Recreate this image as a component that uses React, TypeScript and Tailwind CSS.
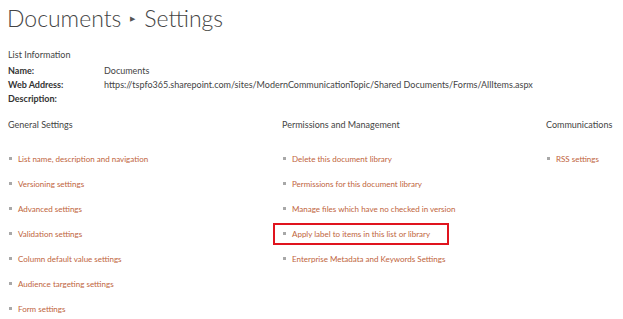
const GENERAL = [
  'List name, description and navigation',
  'Versioning settings',
  'Advanced settings',
  'Validation settings',
  'Column default value settings',
  'Audience targeting settings',
  'Form settings',
]

const PERMISSIONS = [
  'Delete this document library',
  'Permissions for this document library',
  'Manage files which have no checked in version',
  'Apply label to items in this list or library',
  'Enterprise Metadata and Keywords Settings',
]

const COMMS = ['RSS settings']

function LinkItem({ label, boxed }: { label: string; boxed?: boolean }) {
  return (
    <li className="h-[25px] flex items-center">
      <div
        className={`flex items-center gap-[6px] h-[22px] ${
          boxed ? 'border-2 border-[#e0141e] -ml-[9px] pl-[7px] pr-[17px]' : ''
        }`}
      >
        <span className="w-[3px] h-[3px] bg-[#a8a8a8] shrink-0 ml-[1px]" />
        <span className="text-[8px] text-[#c0643c]">{label}</span>
      </div>
    </li>
  )
}

function Section({ title, items, boxedIndex }: { title: string; items: string[]; boxedIndex?: number }) {
  return (
    <div>
      <p className="h-[20px] leading-[20px] text-[#444]">{title}</p>
      <ul className="mt-[11px]">
        {items.map((label, i) => (
          <LinkItem key={label} label={label} boxed={i === boxedIndex} />
        ))}
      </ul>
    </div>
  )
}

export default function App() {
  return (
    <div
      className="w-[623px] h-[319px] bg-white overflow-hidden pl-[8px] text-[9px]"
      style={{ fontFamily: 'Lato, "Open Sans", "Liberation Sans", sans-serif' }}
    >
      {/* Title */}
      <h1 className="flex items-center h-[36px] text-[23px] font-light text-[#444] -ml-[1px]">
        <span>Documents</span>
        <span className="mx-[9px] text-[7px] text-[#555]">&#9654;</span>
        <span>Settings</span>
      </h1>

      {/* List info */}
      <div className="mt-[12px] text-[#444]">
        <p className="h-[14px] leading-[14px]">List Information</p>
        <div className="grid grid-cols-[96px_1fr] leading-[14px] mt-[2px]">
          <span className="font-bold text-[#333]">Name:</span>
          <span>Documents</span>
          <span className="font-bold text-[#333]">Web Address:</span>
          <span>https://tspfo365.sharepoint.com/sites/ModernCommunicationTopic/Shared Documents/Forms/AllItems.aspx</span>
          <span className="font-bold text-[#333]">Description:</span>
          <span />
        </div>
      </div>

      {/* Settings columns */}
      <div className="grid grid-cols-[274px_264px_1fr] mt-[9px]">
        <Section title="General Settings" items={GENERAL} />
        <Section title="Permissions and Management" items={PERMISSIONS} boxedIndex={3} />
        <Section title="Communications" items={COMMS} />
      </div>
    </div>
  )
}
